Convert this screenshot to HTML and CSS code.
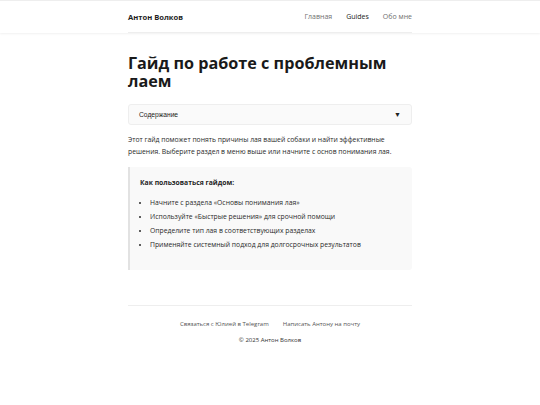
FILE: index.html
```html
<!DOCTYPE html>
<html lang="ru">
<head>
<meta charset="utf-8">
<title>Гайд по работе с проблемным лаем</title>
<link rel="stylesheet" href="styles.css">
</head>
<body>
<header class="site-header">
  <div class="container header-inner">
    <a class="brand" href="#">Антон Волков</a>
    <nav class="nav">
      <a href="#">Главная</a>
      <a href="#" class="active">Guides</a>
      <a href="#">Обо мне</a>
    </nav>
  </div>
</header>
<main class="container">
  <h1 class="title">Гайд по работе с проблемным лаем</h1>
  <div class="toc">
    <span class="toc-label">Содержание</span>
    <span class="toc-arrow">▼</span>
  </div>
  <p class="intro">Этот гайд поможет понять причины лая вашей собаки и найти эффективные решения. Выберите раздел в меню выше или начните с основ понимания лая.</p>
  <div class="howto">
    <p class="howto-title">Как пользоваться гайдом:</p>
    <ul class="howto-list">
      <li>Начните с раздела «Основы понимания лая»</li>
      <li>Используйте «Быстрые решения» для срочной помощи</li>
      <li>Определите тип лая в соответствующих разделах</li>
      <li>Применяйте системный подход для долгосрочных результатов</li>
    </ul>
  </div>
</main>
<footer class="container footer">
  <div class="footer-links">
    <a href="#">Связаться с Юлией в Telegram</a>
    <a href="#">Написать Антону на почту</a>
  </div>
  <p class="copy">© 2025 Антон Волков</p>
</footer>
</body>
</html>
```
FILE: styles.css
```css
* { box-sizing: border-box; }
html, body { margin: 0; padding: 0; }
body {
  font-family: "Open Sans", "Noto Sans", sans-serif;
  color: #222;
  background: #fff;
  font-size: 6.8px;
}
a { text-decoration: none; color: inherit; }
.container {
  width: 284px;
  margin: 0 auto;
}
.site-header {
  box-shadow: 0 1px 2px rgba(0,0,0,0.06);
  border-top: 1px solid #eee;
}
.header-inner {
  display: flex;
  justify-content: space-between;
  align-items: center;
  height: 32px;
  border-bottom: 1px solid #eee;
}
.brand {
  font-weight: 700;
  font-size: 7.6px;
  color: #1e1e1e;
}
.nav {
  display: flex;
  gap: 14px;
  font-size: 7px;
}
.nav a { color: #6f6f6f; }
.nav a.active { color: #222; }
.title {
  font-size: 16.2px;
  line-height: 18px;
  font-weight: 700;
  margin: 21px 0 14px;
  color: #1a1a1a;
}
.toc {
  display: flex;
  justify-content: space-between;
  align-items: center;
  height: 21px;
  padding: 0 10px;
  background: #fafafa;
  border: 1px solid #eee;
  border-radius: 3px;
  font-family: "Liberation Sans", Arial, sans-serif;
  font-size: 6.7px;
  color: #222;
}
.toc-arrow { font-size: 7px; }
.intro {
  margin: 9px 0 9px;
  line-height: 12px;
  color: #2a2a2a;
}
.howto {
  background: #f9f9f9;
  border-left: 2px solid #e2e2e2;
  border-radius: 0 3px 3px 0;
  padding: 10px 10px 18px;
}
.howto-title {
  font-weight: 700;
  margin: 0 0 7px;
  line-height: 12px;
  color: #1e1e1e;
}
.howto-list {
  margin: 0;
  padding-left: 10px;
  color: #2a2a2a;
}
.howto-list li {
  line-height: 14px;
}
.footer {
  margin-top: 35px;
  border-top: 1px solid #eee;
  padding: 14px 0 0;
  text-align: center;
  font-size: 6px;
  line-height: 9px;
  color: #555;
}
.footer-links {
  display: flex;
  justify-content: center;
  gap: 14px;
}
.copy {
  margin: 7px 0 0;
  color: #333;
}
```
